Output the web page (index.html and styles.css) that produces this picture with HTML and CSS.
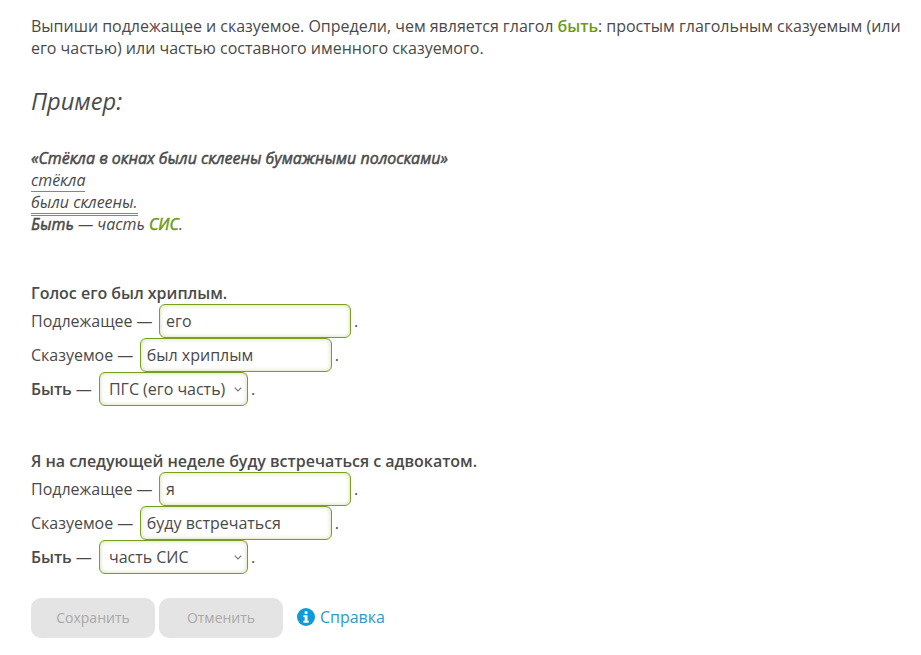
FILE: index.html
```html
<!DOCTYPE html>
<html lang="ru">
<head>
<meta charset="utf-8">
<title>Упражнение</title>
<link rel="stylesheet" href="styles.css">
</head>
<body>
<main class="page">
  <p class="task">Выпиши подлежащее и сказуемое. Определи, чем является глагол <b class="accent">быть</b>: простым глагольным сказуемым (или его частью) или частью составного именного сказуемого.</p>
  <h2 class="example-title">Пример:</h2>
  <div class="example">
    <div><b>«Стёкла в окнах были склеены бумажными полосками»</b></div>
    <div><span class="subject">стёкла</span></div>
    <div><span class="predicate">были склеены.</span></div>
    <div><b>Быть</b> — часть <b class="accent">СИС</b>.</div>
  </div>
  <section class="exercise">
    <div class="sentence">Голос его был хриплым.</div>
    <div class="row"><span class="label">Подлежащее —</span><input class="field field-subject" type="text" value="его"><span>.</span></div>
    <div class="row"><span class="label">Сказуемое —</span><input class="field field-predicate" type="text" value="был хриплым"><span>.</span></div>
    <div class="row"><span class="label"><b>Быть</b> —</span><select class="choice"><option>ПГС (его часть)</option><option>часть СИС</option></select><span>.</span></div>
  </section>
  <section class="exercise">
    <div class="sentence">Я на следующей неделе буду встречаться с адвокатом.</div>
    <div class="row"><span class="label">Подлежащее —</span><input class="field field-subject" type="text" value="я"><span>.</span></div>
    <div class="row"><span class="label">Сказуемое —</span><input class="field field-predicate" type="text" value="буду встречаться"><span>.</span></div>
    <div class="row"><span class="label"><b>Быть</b> —</span><select class="choice"><option>часть СИС</option><option>ПГС (его часть)</option></select><span>.</span></div>
  </section>
  <div class="actions">
    <button class="btn" type="button" disabled>Сохранить</button>
    <button class="btn" type="button" disabled>Отменить</button>
    <a class="help" href="#">
      <svg class="help-icon" width="18" height="18" viewBox="0 0 18 18" aria-hidden="true"><circle cx="9" cy="9" r="9" fill="#0e9bd8"/><rect x="7.6" y="3.2" width="2.9" height="2.7" rx=".6" fill="#fff"/><path d="M6.4 7.2h4.1v5.6h1.2v2H6.4v-2h1.3V9.2H6.4z" fill="#fff"/></svg>
      <span>Справка</span>
    </a>
  </div>
</main>
</body>
</html>
```
FILE: styles.css
```css
* { box-sizing: border-box; }
html, body { margin: 0; background: #fff; }
body {
  font-family: "Open Sans", "Noto Sans", sans-serif;
  font-size: 16px;
  line-height: 22px;
  letter-spacing: -0.015px;
  color: #4a4a4a;
}
.page { padding: 15px 15px 0 31px; }
.task { margin: 0; }
b { font-weight: 600; }
.accent { color: #6f9a13; }
.example-title {
  margin: 25px 0 29px;
  font-size: 23.7px;
  line-height: 34px;
  font-weight: 400;
  font-style: italic;
}
.example { font-style: italic; margin-bottom: 47px; }
.example b { font-weight: 400; -webkit-text-stroke: 0.5px currentColor; }
.subject {
  display: inline-block;
  height: 23px;
  margin-bottom: -1px;
  vertical-align: top;
  border-bottom: 1px solid #7a9e1f;
}
.predicate {
  display: inline-block;
  height: 25px;
  margin-bottom: -3px;
  vertical-align: top;
  border-bottom: 3px double #7a9e1f;
}
.exercise { margin-bottom: 44px; }
.exercise:last-of-type { margin-bottom: 24px; }
.sentence { font-weight: 600; }
.row { display: flex; align-items: center; height: 34px; }
.label { margin-right: 6.5px; }
.field, .choice {
  height: 34px;
  font: inherit;
  letter-spacing: inherit;
  color: #4a4a4a;
  background: #fff;
  border: 1px solid #7a9e1f;
  border-radius: 6px;
  box-shadow: inset 0 0 4px rgba(122, 158, 31, .4);
  outline: none;
}
.field { padding: 0 6px; margin-right: 3px; }
.field-subject { width: 192px; }
.field-predicate { width: 192px; }
.choice {
  width: 149px;
  padding: 0 4px 0 9px;
  margin-left: 0.6px;
  margin-right: 3px;
  appearance: none;
  background: #fff url("data:image/svg+xml,%3Csvg xmlns='http://www.w3.org/2000/svg' width='8' height='5' viewBox='0 0 8 5'%3E%3Cpath d='M.7.7 4 4l3.3-3.3' fill='none' stroke='%23777' stroke-width='1.2'/%3E%3C/svg%3E") no-repeat right 5px center;
}
.actions { display: flex; align-items: center; gap: 4px; }
.btn {
  width: 124px;
  height: 40px;
  border: 0;
  border-radius: 10px;
  background: #e4e4e4;
  color: #a9a9a9;
  font: inherit;
  font-size: 14px;
}
.help {
  display: flex;
  align-items: center;
  gap: 5px;
  margin-left: 10px;
  padding-bottom: 2px;
  color: #2a9cc9;
  text-decoration: none;
}
```
